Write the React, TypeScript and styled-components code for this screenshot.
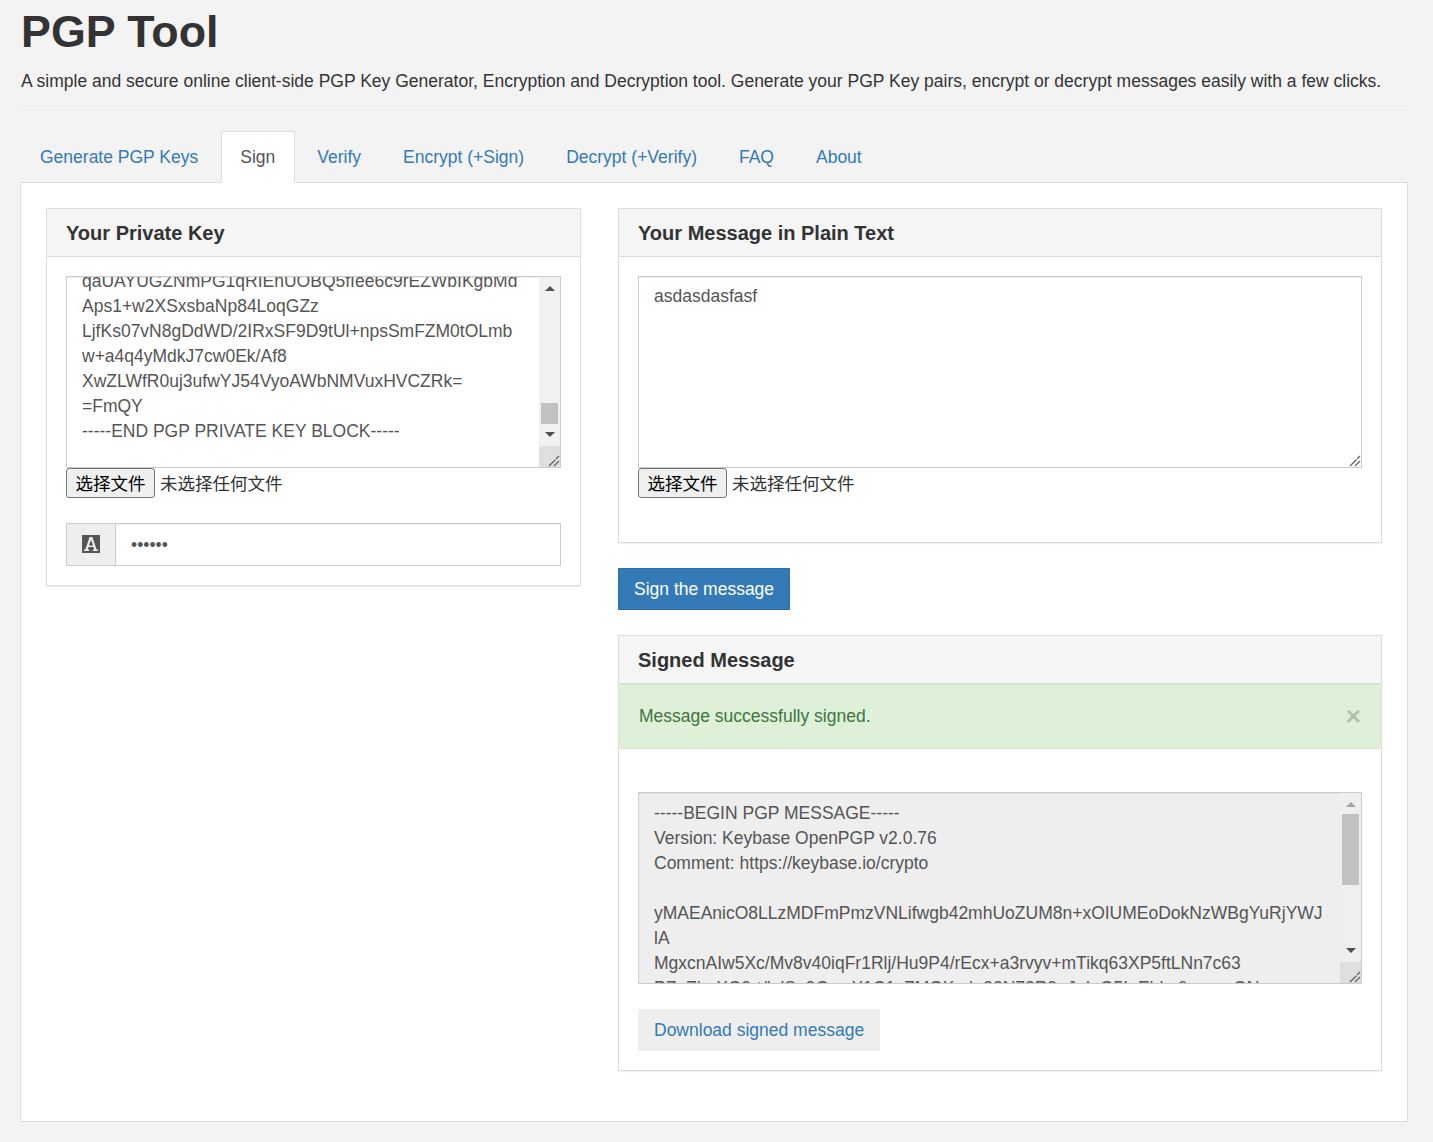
import React, { useEffect, useRef } from "react";
import styled, { createGlobalStyle, css } from "styled-components";

const GlobalStyle = createGlobalStyle`
  html, body { margin: 0; padding: 0; background: #f3f3f3; }
  body { font-family: "Liberation Sans", Arial, sans-serif; font-size: 17.5px; line-height: 25px; color: #333; }
  * { box-sizing: border-box; }
`;

const Page = styled.div`
  padding: 0 25px 19px 20px;
`;

const Masthead = styled.header`
  padding-left: 1px;
  padding-bottom: 11px;
  border-bottom: 1px solid #eee;
  margin-bottom: 25px;
`;

const Title = styled.h1`
  margin: 0;
  padding-top: 7px;
  font-size: 44.8px;
  line-height: 48px;
  font-weight: 700;
  color: #333;
`;

const Lead = styled.p`
  margin: 14px 0 0;
  font-size: 17.5px;
  line-height: 25px;
  color: #333;
`;

const TabList = styled.nav`
  display: flex;
  gap: 2px;
  height: 52px;
  position: relative;
  z-index: 1;
  margin-bottom: -1px;
`;

const Tab = styled.a<{ $active?: boolean }>`
  display: block;
  padding: 13px 19px 0;
  border: 1px solid transparent;
  color: #337ab7;
  font-size: 17.5px;
  line-height: 25px;
  text-decoration: none;
  ${(p) =>
    p.$active &&
    css`
      margin-left: 1px;
      padding-left: 18px;
      background: #fff;
      color: #555;
      border-color: #ddd #ddd #fff;
    `}
`;

const TabPanel = styled.main`
  display: grid;
  grid-template-columns: 535px 764px;
  column-gap: 37px;
  align-items: start;
  background: #fff;
  border: 1px solid #ddd;
  padding: 25px 25px 50px;
`;

const Column = styled.section`
  display: flex;
  flex-direction: column;
  gap: 25px;
`;

const Panel = styled.div`
  background: #fff;
  border: 1px solid #ddd;
  box-shadow: 0 1px 1px rgba(0, 0, 0, 0.05);
`;

const PanelHeading = styled.h3`
  margin: 0;
  height: 48px;
  padding: 12px 19px 0;
  background: #f5f5f5;
  border-bottom: 1px solid #ddd;
  font-size: 20px;
  line-height: 24px;
  font-weight: 700;
  color: #333;
`;

const PanelBody = styled.div`
  padding: 19px;
`;

const TextWrap = styled.div`
  position: relative;
`;

const TextBox = styled.textarea<{ $rail?: boolean }>`
  display: block;
  width: 100%;
  height: 192px;
  padding: 7px ${(p) => (p.$rail ? "36px" : "15px")} 6px 15px;
  margin: 0;
  border: 1px solid #ccc;
  border-radius: 0;
  outline: 0;
  box-shadow: inset 0 1px 1px rgba(0, 0, 0, 0.075);
  background: #fff;
  color: #555;
  font-family: "Liberation Sans", Arial, sans-serif;
  font-size: 17.5px;
  line-height: 25px;
  white-space: pre-wrap;
  resize: none;
  overflow: hidden;
  &[readonly] {
    padding-top: 8px;
    background: #eee;
  }
`;

const Rail = styled.div<{ $muted?: boolean }>`
  position: absolute;
  top: 1px;
  right: 1px;
  bottom: 1px;
  width: 21px;
  display: flex;
  flex-direction: column;
  background: ${(p) => (p.$muted ? "#efefef" : "#f1f1f1")};
`;

const RailStep = styled.div<{ $down?: boolean }>`
  flex: 0 0 20px;
  display: flex;
  align-items: center;
  justify-content: center;
  padding: ${(p) => (p.$down ? "0 0 3px" : "2px 0 0")};
`;

const RailTrack = styled.div`
  flex: 1;
  min-height: 0;
  padding: 0 2px;
`;

const RailThumb = styled.div<{ $top: number; $size: number }>`
  margin-top: ${(p) => p.$top}px;
  height: ${(p) => p.$size}px;
  background: #c1c1c1;
`;

const RailCorner = styled.div`
  flex: 0 0 21px;
  display: flex;
  align-items: flex-end;
  justify-content: flex-end;
  background: #dfdfdf;
`;

const ResizeSpot = styled.div`
  position: absolute;
  right: 1px;
  bottom: 1px;
  display: flex;
`;

const Arrow = ({ up, color }: { up?: boolean; color: string }) => (
  <svg width="10" height="5" viewBox="0 0 10 5" aria-hidden="true">
    <path d={up ? "M0 5h10L5 0z" : "M0 0h10L5 5z"} fill={color} />
  </svg>
);

const Grip = () => (
  <svg width="13" height="13" viewBox="0 0 13 13" aria-hidden="true">
    <path d="M2 12 12 2M7 12l5-5" stroke="#666" strokeWidth="1.400" strokeDasharray="9 1 4" fill="none" />
  </svg>
);

const ScrollRail = ({ top, size, muted, upColor }: { top: number; size: number; muted?: boolean; upColor: string }) => (
  <Rail $muted={muted}>
    <RailStep>
      <Arrow up color={upColor} />
    </RailStep>
    <RailTrack>
      <RailThumb $top={top} $size={size} />
    </RailTrack>
    <RailStep $down>
      <Arrow color="#505050" />
    </RailStep>
    <RailCorner>
      <Grip />
    </RailCorner>
  </Rail>
);

const FilePicker = styled.div`
  display: flex;
  align-items: center;
  height: 30px;
  margin-bottom: 25px;
  font-family: "Noto Sans CJK SC", "Liberation Sans", sans-serif;
  font-size: 17.5px;
  color: #333;
`;

const FileButton = styled.button`
  width: 89px;
  height: 30px;
  padding: 0 0 2px;
  margin: 0 5px 0 0;
  background: #efefef;
  border: 1px solid #767676;
  border-radius: 3px;
  color: #000;
  font: inherit;
`;

const FileStatus = styled.span`
  padding-bottom: 2px;
`;

const InputGroup = styled.div`
  display: flex;
  height: 43px;
  border: 1px solid #ccc;
`;

const Addon = styled.span`
  flex: 0 0 49px;
  display: flex;
  align-items: center;
  justify-content: center;
  padding-bottom: 2px;
  background: #eee;
  border-right: 1px solid #ccc;
`;

const Password = styled.input`
  flex: 1;
  min-width: 0;
  border: 0;
  outline: 0;
  padding: 1px 15px 0;
  background: #fff;
  color: #555;
  font-family: "Liberation Sans", Arial, sans-serif;
  font-size: 17.5px;
  box-shadow: inset 0 1px 1px rgba(0, 0, 0, 0.075);
`;

const PrimaryButton = styled.button`
  align-self: flex-start;
  height: 42px;
  padding: 0 15px;
  background: #337ab7;
  border: 1px solid #2e6da4;
  border-radius: 0;
  color: #fff;
  font-family: "Liberation Sans", Arial, sans-serif;
  font-size: 17.5px;
  line-height: 25px;
`;

const Alert = styled.div`
  display: flex;
  justify-content: space-between;
  align-items: center;
  height: 65px;
  padding: 0 20px;
  background: #dff0d8;
  border-top: 1px solid #d6e9c6;
  border-bottom: 1px solid #d6e9c6;
  color: #3c763d;
`;

const AlertClose = styled.button`
  padding: 0;
  border: 0;
  background: none;
  color: #000;
  opacity: 0.2;
  font-family: "Liberation Sans", Arial, sans-serif;
  font-size: 26px;
  line-height: 27px;
  font-weight: 700;
`;

const SignedBody = styled.div`
  padding: 43px 19px 19px;
`;

const DownloadLink = styled.a`
  display: inline-block;
  height: 42px;
  margin-top: 25px;
  padding: 9px 16px 0;
  background: #eee;
  color: #337ab7;
  font-size: 17.5px;
  line-height: 25px;
  text-decoration: none;
  vertical-align: top;
`;

const FontIcon = () => (
  <svg width="18" height="18" viewBox="0 0 18 18" aria-hidden="true">
    <path
      fillRule="evenodd"
      fill="#555"
      d="M0 0h18v18H0zM7.600 2 3.400 14.400H2V16h5.200v-1.600H5.700l.8-2.400h5l.8 2.400h-1.500V16h5.200v-1.600h-1.400L10.400 2zM9 4.800l2 5.600H7z"
    />
  </svg>
);

const filler = [
  "mQINBFmW3ksBEADc7hTfQ2xYpLkV9sGdE4uRnZa",
  "Tg5rWzAe2sDkLq7YhFpXc3NuVb9JmOi1GtRw6Ky",
  "Ks2TgYq9LdWn4ZrAe7XcVh1PbFu6MjOi3GtRy5K",
  "p7Hd3XkLq1YzFsWc9NuVb5JmOi2GtRw8KyEa6Zl",
  "Zc4NvBm8JqOi6GtRu2KyEa0ZlSdQh5PfCxHj9Uo",
];

const privateKey = [
  "-----BEGIN PGP PRIVATE KEY BLOCK-----",
  "Version: Keybase OpenPGP v2.0.76",
  "Comment: https://keybase.io/crypto",
  "",
  ...Array.from({ length: 37 }, (_, i) => filler[i % filler.length]),
  "qaUAYUGZNmPG1qRIEnUOBQ5fIee6c9rEZWbIKgbMd",
  "Aps1+w2XSxsbaNp84LoqGZz",
  "LjfKs07vN8gDdWD/2IRxSF9D9tUl+npsSmFZM0tOLmb",
  "w+a4q4yMdkJ7cw0Ek/Af8",
  "XwZLWfR0uj3ufwYJ54VyoAWbNMVuxHVCZRk=",
  "=FmQY",
  "-----END PGP PRIVATE KEY BLOCK-----",
  "",
  "",
].join("\n");

const signedMessage = [
  "-----BEGIN PGP MESSAGE-----",
  "Version: Keybase OpenPGP v2.0.76",
  "Comment: https://keybase.io/crypto",
  "",
  "yMAEAnicO8LLzMDFmPmzVNLifwgb42mhUoZUM8n+xOIUMEoDokNzWBgYuRjYWJ",
  "lA",
  "MgxcnAIw5Xc/Mv8v40iqFr1Rlj/Hu9P4/rEcx+a3rvyv+mTikq63XP5ftLNn7c63",
  "PZnZhoXG9rt/lplSg9GwqX1C1sZMGKcd+32N72R9nJnIqG5InEhLz0yapvvON",
  "Wq4TsYd7mLk2VbXhQf8ZcNuR0eJoP1aGiK3tHy",
  "Xe5RbUv9nTg7CwDm",
  "=c1Zk",
  "-----END PGP MESSAGE-----",
  "",
].join("\n");

const tabs = ["Generate PGP Keys", "Sign", "Verify", "Encrypt (+Sign)", "Decrypt (+Verify)", "FAQ", "About"];

const FileField = () => (
  <FilePicker>
    <FileButton type="button">选择文件</FileButton>
    <FileStatus>未选择任何文件</FileStatus>
  </FilePicker>
);

export default function App() {
  const keyRef = useRef<HTMLTextAreaElement>(null);

  useEffect(() => {
    const el = keyRef.current;
    if (el) el.scrollTop = el.scrollHeight - el.clientHeight - 33;
  }, []);

  return (
    <Page>
      <GlobalStyle />
      <Masthead>
        <Title>PGP Tool</Title>
        <Lead>
          A simple and secure online client-side PGP Key Generator, Encryption and Decryption tool. Generate your PGP Key pairs, encrypt or decrypt messages easily with a few clicks.
        </Lead>
      </Masthead>
      <TabList>
        {tabs.map((t) => (
          <Tab key={t} href="#" $active={t === "Sign"}>
            {t}
          </Tab>
        ))}
      </TabList>
      <TabPanel>
        <Column>
          <Panel>
            <PanelHeading>Your Private Key</PanelHeading>
            <PanelBody>
              <TextWrap>
                <TextBox ref={keyRef} $rail defaultValue={privateKey} spellCheck={false} />
                <ScrollRail top={106} size={21} upColor="#505050" />
              </TextWrap>
              <FileField />
              <InputGroup>
                <Addon>
                  <FontIcon />
                </Addon>
                <Password type="password" defaultValue="123456" />
              </InputGroup>
            </PanelBody>
          </Panel>
        </Column>
        <Column>
          <Panel>
            <PanelHeading>Your Message in Plain Text</PanelHeading>
            <PanelBody>
              <TextWrap>
                <TextBox defaultValue="asdasdasfasf" spellCheck={false} />
                <ResizeSpot>
                  <Grip />
                </ResizeSpot>
              </TextWrap>
              <FileField />
            </PanelBody>
          </Panel>
          <PrimaryButton type="button">Sign the message</PrimaryButton>
          <Panel>
            <PanelHeading>Signed Message</PanelHeading>
            <Alert>
              <span>Message successfully signed.</span>
              <AlertClose type="button">×</AlertClose>
            </Alert>
            <SignedBody>
              <TextWrap>
                <TextBox $rail readOnly defaultValue={signedMessage} spellCheck={false} />
                <ScrollRail top={1} size={71} muted upColor="#a3a3a3" />
              </TextWrap>
              <DownloadLink href="#">Download signed message</DownloadLink>
            </SignedBody>
          </Panel>
        </Column>
      </TabPanel>
    </Page>
  );
}
